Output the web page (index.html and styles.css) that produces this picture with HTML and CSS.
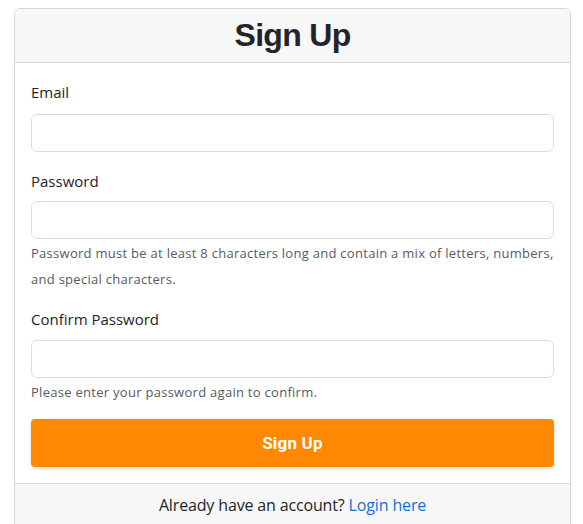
FILE: index.html
```html
<!DOCTYPE html>
<html lang="en">
<head>
<meta charset="utf-8">
<title>Sign Up</title>
<link rel="stylesheet" href="styles.css">
</head>
<body>
<div class="card">
  <div class="card-header"><h1 class="title">Sign Up</h1></div>
  <form class="card-body">
    <div class="group group-first">
      <label class="label" for="email">Email</label>
      <input class="input" id="email" type="email">
    </div>
    <div class="group group-help">
      <label class="label" for="pw">Password</label>
      <input class="input" id="pw" type="password">
      <p class="help">Password must be at least 8 characters long and contain a mix of letters, numbers, and special characters.</p>
    </div>
    <div class="group group-last">
      <label class="label" for="pw2">Confirm Password</label>
      <input class="input" id="pw2" type="password">
      <p class="help">Please enter your password again to confirm.</p>
    </div>
    <button class="btn" type="button">Sign Up</button>
  </form>
  <div class="card-footer">Already have an account? <a class="link" href="#">Login here</a></div>
</div>
</body>
</html>
```
FILE: styles.css
```css
html, body {
  margin: 0;
  padding: 0;
  background: #fff;
}
body {
  padding: 8px 12px 0 14px;
  font-family: "Open Sans", "Noto Sans", sans-serif;
  color: #212529;
}
.card {
  border: 1px solid #d6d6d6;
  border-radius: 6px;
  overflow: hidden;
  background: #fff;
}
.card-header {
  background: #f7f7f7;
  border-bottom: 1px solid #d6d6d6;
  height: 53px;
  display: flex;
  align-items: center;
  justify-content: center;
}
.title {
  margin: 0;
  font-family: "Liberation Sans", Arial, sans-serif;
  font-weight: 700;
  font-size: 32px;
  color: #212529;
  letter-spacing: -0.7px;
}
.card-body {
  padding: 18px 16px 16px;
  display: flex;
  flex-direction: column;
}
.group {
  display: flex;
  flex-direction: column;
  margin-bottom: 18px;
}
.group-help {
  margin-bottom: 16px;
}
.group-last {
  margin-bottom: 14px;
}
.label {
  font-size: 15px;
  line-height: 22px;
  margin-bottom: 9px;
  color: #212529;
}
.group-first .label {
  margin-bottom: 11px;
}
.group-last .label {
  margin-bottom: 10px;
}
.input {
  height: 38px;
  box-sizing: border-box;
  border: 1px solid #dcdde2;
  border-radius: 6px;
  margin: 0;
  padding: 6px 12px;
  font: inherit;
}
.help {
  margin: 1px 0 0;
  font-size: 13px;
  line-height: 26px;
  letter-spacing: 0.28px;
  color: #555b62;
}
.btn {
  height: 48px;
  border: none;
  border-radius: 4px;
  background: #ff8800;
  color: #fff;
  font-family: Roboto, "Liberation Sans", sans-serif;
  font-weight: 700;
  font-size: 17px;
  letter-spacing: 0.2px;
  box-shadow: 0 2px 4px rgba(0,0,0,0.12);
  cursor: pointer;
}
.card-footer {
  background: #f7f7f7;
  border-top: 1px solid #d6d6d6;
  padding: 10px 16px 14px;
  text-align: center;
  font-size: 16px;
  line-height: 22px;
  letter-spacing: -0.15px;
}
.link {
  color: #1272d8;
  text-decoration: none;
}
```
